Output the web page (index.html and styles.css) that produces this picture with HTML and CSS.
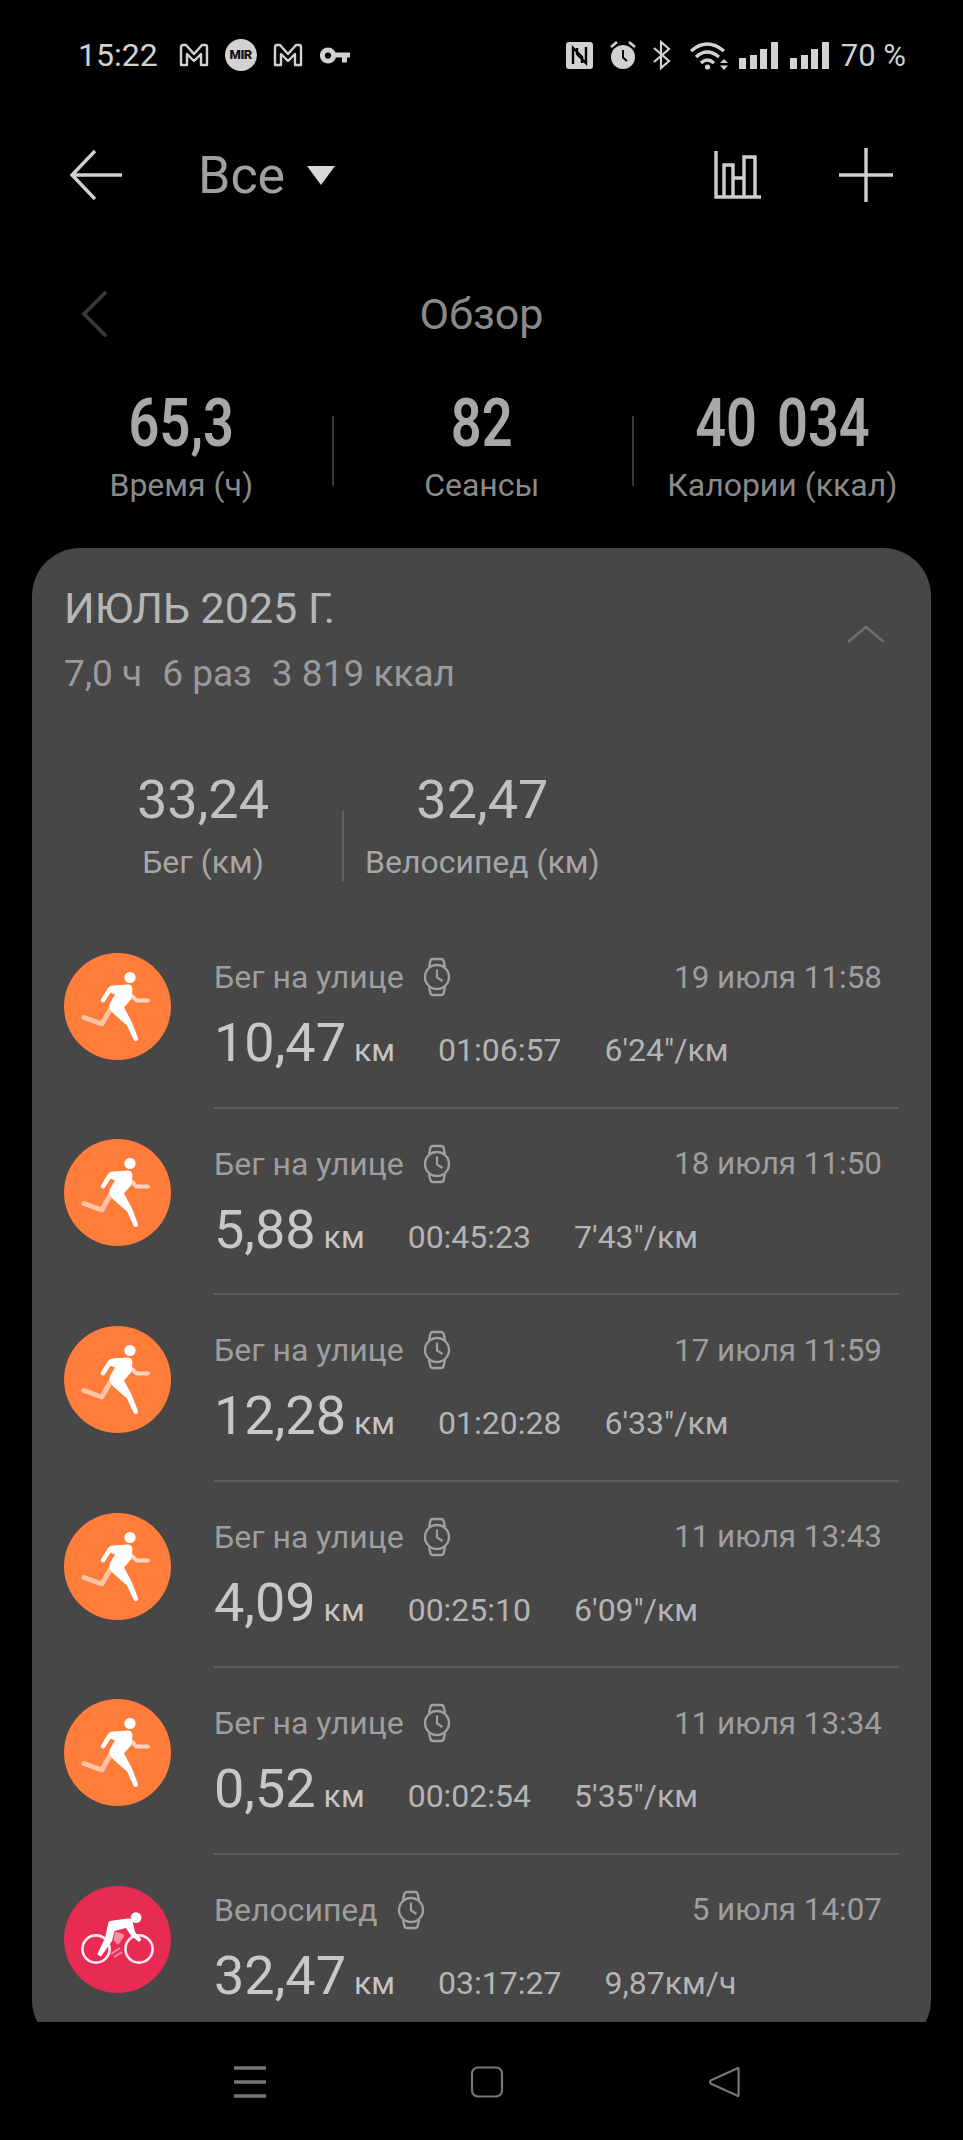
FILE: index.html
```html
<!DOCTYPE html>
<html lang="ru">
<head>
<meta charset="utf-8">
<title>Все</title>
<link rel="stylesheet" href="styles.css">
</head>
<body>
<svg class="defs" width="0" height="0" aria-hidden="true">
  <symbol id="watch" viewBox="0 0 28 40">
    <circle cx="14" cy="20" r="12" fill="none" stroke="currentColor" stroke-width="2.4"/>
    <path d="M6 10 L7.5 3.5 Q8 2 10 2 H18 Q20 2 20.5 3.5 L22 10 M6 30 L7.5 36.5 Q8 38 10 38 H18 Q20 38 20.5 36.5 L22 30" fill="none" stroke="currentColor" stroke-width="2.4"/>
    <path d="M14 12.5 V20.5 L19.5 24" fill="none" stroke="currentColor" stroke-width="2.2"/>
  </symbol>
  <symbol id="runner" viewBox="0 0 107 107">
    <circle cx="53.5" cy="53.5" r="53.5" fill="#ff7c3a"/>
    <path d="M67.5 42.5 L72.5 47.5 H84" fill="none" stroke="#ffd3bd" stroke-width="4" stroke-linecap="round" stroke-linejoin="round"/>
    <path d="M47 55 L37.7 71 L20 64.5" fill="none" stroke="#ffc4a6" stroke-width="5" stroke-linecap="round" stroke-linejoin="round"/>
    <circle cx="66" cy="24.5" r="5.6" fill="#fff"/>
    <path d="M36.6 47 L44 35 Q46 32.6 49 32.6 L64 31.4 Q68.8 31.6 68.4 37 L67.4 46 L60 54.5 L67.6 68.5 L74 85 Q74.4 87.8 71.6 88 Q69.6 88 69 85.6 L63 72.6 L50.5 61.5 Q44 56 46 50 L51 41.5 L46.5 39.8 L40.5 49 Q37.4 50.6 36.6 47Z" fill="#fff"/>
  </symbol>
  <symbol id="cyclist" viewBox="0 0 107 107">
    <circle cx="53.5" cy="53.5" r="53.5" fill="#e72b53"/>
    <circle cx="32" cy="63" r="13.6" fill="none" stroke="#ffe9ed" stroke-width="2.6"/>
    <circle cx="75" cy="63" r="13.6" fill="none" stroke="#ffe9ed" stroke-width="2.6"/>
    <path d="M51 46 Q58 46 60.5 50 L54 59 L49.5 54Z" fill="#f58da3"/>
    <path d="M47 68 L56 62 M50 71 L58 66" stroke="#f58da3" stroke-width="2" fill="none"/>
    <circle cx="72" cy="31.6" r="5.4" fill="#fff"/>
    <path d="M44.5 36 Q46 34.4 49 34.4 L64 32.4 Q67.4 32.4 68.6 35.4 L71 46 L77.5 53.6 L75 56 L66.5 49 L62 42 L50.5 45 L48 55 L37 70.5 L33.2 68.6 L41 52 Z" fill="#fff"/>
  </symbol>
</svg>

<div class="screen">
  <div class="main">
    <div class="status">
      <div class="status-left">
        <span class="clock">15:22</span>
        <svg class="ic-m" viewBox="0 0 30 24"><path d="M2 22 V4 Q2 2 4 2 H7 L15 11 L23 2 H26 Q28 2 28 4 V22 H22 V11 L15 18 L8 11 V22Z" fill="none" stroke="currentColor" stroke-width="2.4" stroke-linejoin="round"/></svg>
        <span class="mir">MIR</span>
        <svg class="ic-m" viewBox="0 0 30 24"><path d="M2 22 V4 Q2 2 4 2 H7 L15 11 L23 2 H26 Q28 2 28 4 V22 H22 V11 L15 18 L8 11 V22Z" fill="none" stroke="currentColor" stroke-width="2.4" stroke-linejoin="round"/></svg>
        <svg class="ic-key" viewBox="0 0 30 17"><circle cx="8" cy="8.5" r="5.6" fill="none" stroke="currentColor" stroke-width="5"/><path d="M13 5.6 H30 V10.6 H27 V15.5 H22 V10.6 H13Z" fill="currentColor"/></svg>
      </div>
      <div class="status-right">
        <svg class="ic-nfc" viewBox="0 0 27 27"><rect width="27" height="27" rx="3" fill="currentColor"/><path d="M7 22 V6 L16 15 V21 M11 6 V12 L20 21 V5" fill="none" stroke="#000" stroke-width="2.4"/></svg>
        <svg class="ic-alarm" viewBox="0 0 28 30"><circle cx="14" cy="17" r="12" fill="currentColor"/><path d="M14 10 V17.5 L18 21" fill="none" stroke="#000" stroke-width="2"/><path d="M2 7 L8 2 M26 7 L20 2" stroke="currentColor" stroke-width="2.6" fill="none"/></svg>
        <svg class="ic-bt" viewBox="0 0 20 30"><path d="M2 8 L17 21 L9 28 V2 L17 9 L2 22" fill="none" stroke="currentColor" stroke-width="2.2"/></svg>
        <svg class="ic-wifi" viewBox="0 0 40 30"><path d="M2 11 Q18 -3 35 11 M7 17 Q18 7 30 17 M12 23 Q18 17 25 23" fill="none" stroke="currentColor" stroke-width="3.4"/><circle cx="18.5" cy="27" r="2.6" fill="currentColor"/><path d="M35 19 L31 23 H39Z M35 30 L31 25.5 H39Z" fill="currentColor"/></svg>
        <span class="bars"><i class="b1"></i><i class="b2"></i><i class="b3"></i><i class="b4"></i></span>
        <span class="bars"><i class="b1"></i><i class="b2"></i><i class="b3"></i><i class="b4"></i></span>
        <span class="batt">70 %</span>
      </div>
    </div>

    <div class="toolbar">
      <svg class="ic-back" viewBox="0 0 54 52"><path d="M26 2 L3 26 L26 50 M3 26 H53" fill="none" stroke="currentColor" stroke-width="3.4"/></svg>
      <span class="tb-title">Все</span>
      <span class="tb-caret"></span>
      <span class="tb-space"></span>
      <svg class="ic-chart" viewBox="0 0 48 48"><path d="M2 0 V46 H47 M10 45 V14 H19 V45 M19 45 V27 H30 V45 M30 45 V6 H41 V45" fill="none" stroke="currentColor" stroke-width="3.4"/></svg>
      <svg class="ic-plus" viewBox="0 0 54 54"><path d="M27 0 V54 M0 27 H54" fill="none" stroke="currentColor" stroke-width="3.4"/></svg>
    </div>

    <div class="pager">
      <svg class="ic-chev" viewBox="0 0 28 46"><path d="M25 2 L4 23 L25 44" fill="none" stroke="currentColor" stroke-width="3.6" stroke-linecap="round"/></svg>
      <span class="pager-title">Обзор</span>
    </div>

    <div class="totals">
      <div class="total"><div class="total-num"><span>65,3</span></div><div class="total-lab">Время (ч)</div></div>
      <div class="total sep"><div class="total-num"><span>82</span></div><div class="total-lab">Сеансы</div></div>
      <div class="total sep"><div class="total-num"><span>40 034</span></div><div class="total-lab">Калории (ккал)</div></div>
    </div>

    <section class="card">
      <div class="card-head">
        <div>
          <div class="month">ИЮЛЬ 2025 Г.</div>
          <div class="month-sub"><span>7,0 ч</span><span>6 раз</span><span>3 819 ккал</span></div>
        </div>
        <svg class="ic-up" viewBox="0 0 40 20"><path d="M2 18 L20 3 L38 18" fill="none" stroke="currentColor" stroke-width="2.6"/></svg>
      </div>

      <div class="sports">
        <div class="sport"><div class="sport-num">33,24</div><div class="sport-lab">Бег (км)</div></div>
        <div class="sport sport-sep"><div class="sport-num">32,47</div><div class="sport-lab">Велосипед (км)</div></div>
      </div>

      <div class="row">
        <svg class="row-icon" viewBox="0 0 107 107"><use href="#runner"/></svg>
        <div class="row-body">
          <div class="row-top"><span class="row-name">Бег на улице</span><svg class="ic-watch" viewBox="0 0 28 40"><use href="#watch"/></svg><span class="row-date">19 июля 11:58</span></div>
          <div class="row-stats"><span class="dist"><b>10,47</b> км</span><span>01:06:57</span><span>6'24"/км</span></div>
        </div>
      </div>
      <div class="row">
        <svg class="row-icon" viewBox="0 0 107 107"><use href="#runner"/></svg>
        <div class="row-body">
          <div class="row-top"><span class="row-name">Бег на улице</span><svg class="ic-watch" viewBox="0 0 28 40"><use href="#watch"/></svg><span class="row-date">18 июля 11:50</span></div>
          <div class="row-stats"><span class="dist"><b>5,88</b> км</span><span>00:45:23</span><span>7'43"/км</span></div>
        </div>
      </div>
      <div class="row">
        <svg class="row-icon" viewBox="0 0 107 107"><use href="#runner"/></svg>
        <div class="row-body">
          <div class="row-top"><span class="row-name">Бег на улице</span><svg class="ic-watch" viewBox="0 0 28 40"><use href="#watch"/></svg><span class="row-date">17 июля 11:59</span></div>
          <div class="row-stats"><span class="dist"><b>12,28</b> км</span><span>01:20:28</span><span>6'33"/км</span></div>
        </div>
      </div>
      <div class="row">
        <svg class="row-icon" viewBox="0 0 107 107"><use href="#runner"/></svg>
        <div class="row-body">
          <div class="row-top"><span class="row-name">Бег на улице</span><svg class="ic-watch" viewBox="0 0 28 40"><use href="#watch"/></svg><span class="row-date">11 июля 13:43</span></div>
          <div class="row-stats"><span class="dist"><b>4,09</b> км</span><span>00:25:10</span><span>6'09"/км</span></div>
        </div>
      </div>
      <div class="row">
        <svg class="row-icon" viewBox="0 0 107 107"><use href="#runner"/></svg>
        <div class="row-body">
          <div class="row-top"><span class="row-name">Бег на улице</span><svg class="ic-watch" viewBox="0 0 28 40"><use href="#watch"/></svg><span class="row-date">11 июля 13:34</span></div>
          <div class="row-stats"><span class="dist"><b>0,52</b> км</span><span>00:02:54</span><span>5'35"/км</span></div>
        </div>
      </div>
      <div class="row">
        <svg class="row-icon" viewBox="0 0 107 107"><use href="#cyclist"/></svg>
        <div class="row-body">
          <div class="row-top"><span class="row-name">Велосипед</span><svg class="ic-watch" viewBox="0 0 28 40"><use href="#watch"/></svg><span class="row-date">5 июля 14:07</span></div>
          <div class="row-stats"><span class="dist"><b>32,47</b> км</span><span>03:17:27</span><span>9,87км/ч</span></div>
        </div>
      </div>
    </section>
  </div>

  <nav class="navbar">
    <svg class="nav-ic" viewBox="0 0 34 32"><path d="M1 2 H33 M1 16 H33 M1 30 H33" fill="none" stroke="currentColor" stroke-width="3.4"/></svg>
    <svg class="nav-ic" viewBox="0 0 34 32"><rect x="2" y="1.5" width="30" height="29" rx="6" fill="none" stroke="currentColor" stroke-width="2.2"/></svg>
    <svg class="nav-ic" viewBox="0 0 34 32"><path d="M30 2.5 Q31.6 1 31.6 3.5 V28.5 Q31.6 31 30 29.6 L4 17.8 Q2 16 4 14.2Z" fill="none" stroke="currentColor" stroke-width="2.2" stroke-linejoin="round"/></svg>
  </nav>
</div>
</body>
</html>
```

FILE: styles.css
```css
* { box-sizing: border-box; }
html, body { margin: 0; padding: 0; background: #000; }
body { width: 963px; height: 2140px; overflow: hidden; font-family: Roboto, "Liberation Sans", sans-serif; }
svg { display: block; flex: none; }
.defs { position: absolute; }
.screen { width: 963px; height: 2140px; display: flex; flex-direction: column; background: #000; }
.main { height: 2022px; overflow: hidden; flex: none; }

/* status bar */
.status { height: 110px; padding: 0 57px 0 78px; display: flex; align-items: center; justify-content: space-between; color: #d2d2d2; }
.status-left, .status-right { display: flex; align-items: center; }
.clock { font-size: 32px; margin-right: 21px; }
.ic-m { width: 30px; height: 24px; }
.mir { width: 32px; height: 32px; margin: 0 16px; border-radius: 50%; background: #d2d2d2; color: #111; font-size: 13px; letter-spacing: -0.5px; font-weight: 900; line-height: 32px; text-align: center; }
.ic-key { width: 30px; height: 17px; margin-left: 17px; }
.ic-nfc { width: 27px; height: 27px; margin-right: 16px; }
.ic-alarm { width: 28px; height: 30px; margin-right: 15px; }
.ic-bt { width: 20px; height: 30px; margin-right: 17px; }
.ic-wifi { width: 40px; height: 30px; margin-right: 10px; }
.bars { display: flex; align-items: flex-end; gap: 3.6px; height: 27px; margin-right: 12px; }
.bars i { width: 7px; background: #d2d2d2; display: block; }
.bars .b1 { height: 11px; }
.bars .b2 { height: 14px; }
.bars .b3 { height: 20px; }
.bars .b4 { height: 27px; }
.batt { font-size: 31px; }

/* toolbar */
.toolbar { height: 130px; padding: 0 70px 0 69px; display: flex; align-items: center; color: #cfcfcf; }
.ic-back { width: 54px; height: 52px; margin-right: 75px; }
.tb-title { font-size: 52px; color: #a0a0a0; margin-right: 22px; }
.tb-caret { width: 0; height: 0; border-left: 14px solid transparent; border-right: 14px solid transparent; border-top: 19px solid #d8d8d8; }
.tb-space { flex: 1; }
.ic-chart { width: 48px; height: 48px; margin-right: 77px; }
.ic-plus { width: 54px; height: 54px; }

/* pager */
.pager { height: 74px; padding: 0 0 0 80px; display: flex; align-items: center; color: #8a8a8a; margin-top: 37px; }
.ic-chev { width: 28px; height: 46px; color: #3a3a3a; }
.pager-title { font-size: 43px; flex: 1; text-align: center; padding-right: 108px; }

/* totals */
.totals { display: grid; grid-template-columns: repeat(3, 300.5px); margin: 28px 0 0 31px; height: 129px; }
.total { text-align: center; position: relative; padding-top: 10px; }
.total-num { font-size: 66px; font-weight: 600; line-height: 70px; color: #a8a8a8; }
.total-num span { display: inline-block; transform: scaleX(0.82); word-spacing: 8px; }
.total-lab { font-size: 32px; line-height: 40px; color: #8a8a8a; margin-top: 6px; }
.sep::before { content: ""; position: absolute; left: 0; top: 37px; height: 70px; width: 2px; background: #383838; }

/* card */
.card { margin: 40px 32px 0; height: 1500px; background: #474747; border-radius: 48px; padding: 0 32px 0 32px; }
.card-head { height: 200px; padding: 35px 1px 0 0; display: flex; justify-content: space-between; }
.month { font-size: 43px; line-height: 50px; color: #b6b6b6; }
.month-sub { font-size: 37px; line-height: 42px; color: #9a9a9a; margin-top: 20px; display: flex; gap: 20px; }
.ic-up { width: 40px; height: 20px; margin: 41px 12px 0 0; color: #6e6e6e; }

.sports { display: flex; height: 174px; padding-top: 22px; }
.sport { text-align: center; color: #a6a6a6; }
.sport:first-child { width: 278px; }
.sport-num { font-size: 54px; line-height: 60px; color: #c0c0c0; }
.sport-lab { font-size: 32px; line-height: 40px; margin-top: 12px; }
.sport-sep { padding-left: 23px; position: relative; }
.sport-sep::before { content: ""; position: absolute; left: 0; top: 41px; width: 2px; height: 70px; background: #626262; }

.row { height: 186.6px; display: flex; align-items: center; gap: 43px; }
.row-icon { width: 107px; height: 107px; margin-top: -18px; }
.row-body { flex: 1; height: 100%; border-bottom: 2px solid #5e5e5e; padding-top: 30px; }
.row:last-child .row-body { border-bottom: 0; }
.row-top { display: flex; align-items: center; height: 50px; color: #9e9e9e; font-size: 32px; padding-right: 17px; }
.ic-watch { width: 28px; height: 40px; margin-left: 19px; color: #a0a0a0; }
.row-date { margin-left: auto; font-size: 31.4px; }
.row-stats { display: flex; align-items: baseline; gap: 43px; color: #b4b4b4; font-size: 32px; margin-top: 9px; }
.dist { color: #c4c4c4; font-size: 32px; }
.dist b { font-weight: 400; font-size: 54px; color: #c8c8c8; }

/* nav bar */
.navbar { height: 118px; padding: 44px 222px 0 233px; display: flex; justify-content: space-between; align-items: flex-start; color: #777; }
.nav-ic { width: 34px; height: 32px; }
```
